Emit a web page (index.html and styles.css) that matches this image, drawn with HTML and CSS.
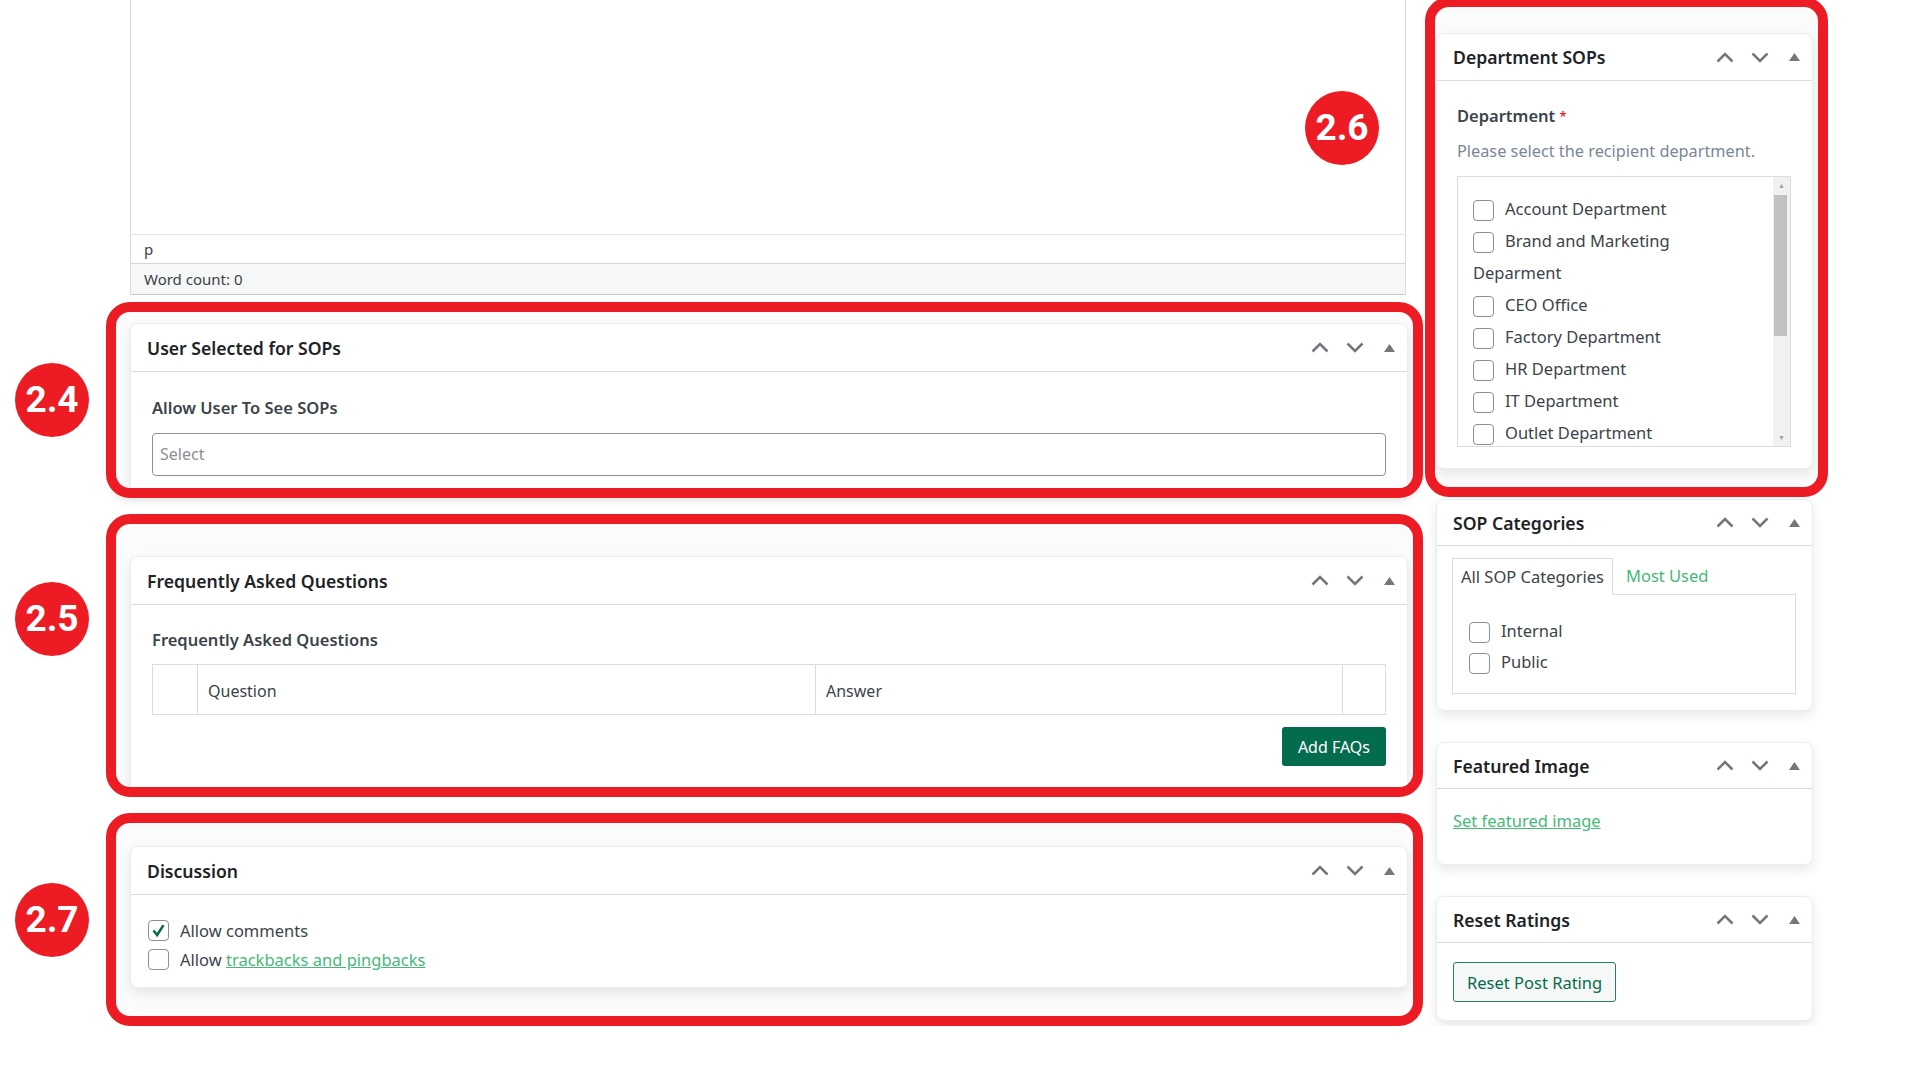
FILE: index.html
```html
<!DOCTYPE html>
<html lang="en">
  <head>
    <meta charset="utf-8" />
    <title>Edit SOP</title>
    <link rel="stylesheet" href="styles.css">
  </head>
  <body>
    <div class="page">
      <div class="main">
        <div class="editor">
          <div class="editor-body"></div>
          <div class="editor-path">p</div>
          <div class="editor-count">Word count: 0</div>
        </div>

        <section class="annot-row row-users">
          <span class="badge">2.4</span>
          <div class="annot annot-users">
            <div class="card">
              <div class="card-head">
                <h2>User Selected for SOPs</h2>
                <div class="handles">
                  <span class="handle"><svg class="chev" viewBox="0 0 18 11"><polyline points="1.5,9.5 9,2 16.5,9.5" /></svg></span>
                  <span class="handle"><svg class="chev" viewBox="0 0 18 11"><polyline points="1.5,1.5 9,9 16.5,1.5" /></svg></span>
                  <span class="handle"><svg class="tri" viewBox="0 0 11 8"><polygon points="0,8 5.5,0 11,8" /></svg></span>
                </div>
              </div>
              <div class="card-body users-body">
                <div class="field-label">Allow User To See SOPs</div>
                <div class="select">Select</div>
              </div>
            </div>
          </div>
        </section>

        <section class="annot-row row-faq">
          <span class="badge">2.5</span>
          <div class="annot annot-faq">
            <div class="card">
              <div class="card-head">
                <h2>Frequently Asked Questions</h2>
                <div class="handles">
                  <span class="handle"><svg class="chev" viewBox="0 0 18 11"><polyline points="1.5,9.5 9,2 16.5,9.5" /></svg></span>
                  <span class="handle"><svg class="chev" viewBox="0 0 18 11"><polyline points="1.5,1.5 9,9 16.5,1.5" /></svg></span>
                  <span class="handle"><svg class="tri" viewBox="0 0 11 8"><polygon points="0,8 5.5,0 11,8" /></svg></span>
                </div>
              </div>
              <div class="card-body faq-body">
                <div class="field-label">Frequently Asked Questions</div>
                <table class="faq-table">
                  <tr>
                    <th class="col-handle"></th>
                    <th class="col-question">Question</th>
                    <th>Answer</th>
                    <th class="col-remove"></th>
                  </tr>
                </table>
                <div class="faq-actions">
                  <button class="btn-primary">Add FAQs</button>
                </div>
              </div>
            </div>
          </div>
        </section>

        <section class="annot-row row-discussion">
          <span class="badge">2.7</span>
          <div class="annot annot-discussion">
            <div class="card">
              <div class="card-head">
                <h2>Discussion</h2>
                <div class="handles">
                  <span class="handle"><svg class="chev" viewBox="0 0 18 11"><polyline points="1.5,9.5 9,2 16.5,9.5" /></svg></span>
                  <span class="handle"><svg class="chev" viewBox="0 0 18 11"><polyline points="1.5,1.5 9,9 16.5,1.5" /></svg></span>
                  <span class="handle"><svg class="tri" viewBox="0 0 11 8"><polygon points="0,8 5.5,0 11,8" /></svg></span>
                </div>
              </div>
              <div class="card-body discussion-body">
                <div class="check-row">
                  <span class="box checked"><svg viewBox="0 0 21 21"><polyline points="5,10.5 9,15.5 16,4.5" /></svg></span>
                  Allow comments
                </div>
                <div class="check-row">
                  <span class="box"></span>
                  Allow&nbsp;<a href="#">trackbacks and pingbacks</a>
                </div>
              </div>
            </div>
          </div>
        </section>
      </div>

      <div class="side">
        <section class="annot-row row-dept">
          <span class="badge">2.6</span>
          <div class="annot annot-dept">
            <div class="card">
              <div class="card-head head-tall">
                <h2>Department SOPs</h2>
                <div class="handles">
                  <span class="handle"><svg class="chev" viewBox="0 0 18 11"><polyline points="1.5,9.5 9,2 16.5,9.5" /></svg></span>
                  <span class="handle"><svg class="chev" viewBox="0 0 18 11"><polyline points="1.5,1.5 9,9 16.5,1.5" /></svg></span>
                  <span class="handle"><svg class="tri" viewBox="0 0 11 8"><polygon points="0,8 5.5,0 11,8" /></svg></span>
                </div>
              </div>
              <div class="card-body dept-body">
                <div class="field-label">Department <span class="required">*</span></div>
                <p class="description">Please select the recipient department.</p>
                <div class="checklist">
                  <div class="checklist-items">
                    <div class="item"><span class="box"></span>Account Department</div>
                    <div class="item"><span class="box"></span>Brand and Marketing<br>Deparment</div>
                    <div class="item"><span class="box"></span>CEO Office</div>
                    <div class="item"><span class="box"></span>Factory Department</div>
                    <div class="item"><span class="box"></span>HR Department</div>
                    <div class="item"><span class="box"></span>IT Department</div>
                    <div class="item"><span class="box"></span>Outlet Department</div>
                  </div>
                  <div class="scrollbar">
                    <span class="scroll-arrow">&#9650;</span>
                    <span class="scroll-thumb"></span>
                    <span class="scroll-track"></span>
                    <span class="scroll-arrow">&#9660;</span>
                  </div>
                </div>
              </div>
            </div>
          </div>
        </section>

        <div class="card side-card card-cats">
          <div class="card-head">
            <h2>SOP Categories</h2>
            <div class="handles">
              <span class="handle"><svg class="chev" viewBox="0 0 18 11"><polyline points="1.5,9.5 9,2 16.5,9.5" /></svg></span>
              <span class="handle"><svg class="chev" viewBox="0 0 18 11"><polyline points="1.5,1.5 9,9 16.5,1.5" /></svg></span>
              <span class="handle"><svg class="tri" viewBox="0 0 11 8"><polygon points="0,8 5.5,0 11,8" /></svg></span>
            </div>
          </div>
          <div class="card-body cats-body">
            <div class="tabs">
              <span class="tab active">All SOP Categories</span>
              <a class="tab" href="#">Most Used</a>
            </div>
            <div class="tab-panel">
              <div class="item"><span class="box"></span>Internal</div>
              <div class="item"><span class="box"></span>Public</div>
            </div>
          </div>
        </div>

        <div class="card side-card">
          <div class="card-head">
            <h2>Featured Image</h2>
            <div class="handles">
              <span class="handle"><svg class="chev" viewBox="0 0 18 11"><polyline points="1.5,9.5 9,2 16.5,9.5" /></svg></span>
              <span class="handle"><svg class="chev" viewBox="0 0 18 11"><polyline points="1.5,1.5 9,9 16.5,1.5" /></svg></span>
              <span class="handle"><svg class="tri" viewBox="0 0 11 8"><polygon points="0,8 5.5,0 11,8" /></svg></span>
            </div>
          </div>
          <div class="card-body image-body">
            <a href="#">Set featured image</a>
          </div>
        </div>

        <div class="card side-card">
          <div class="card-head">
            <h2>Reset Ratings</h2>
            <div class="handles">
              <span class="handle"><svg class="chev" viewBox="0 0 18 11"><polyline points="1.5,9.5 9,2 16.5,9.5" /></svg></span>
              <span class="handle"><svg class="chev" viewBox="0 0 18 11"><polyline points="1.5,1.5 9,9 16.5,1.5" /></svg></span>
              <span class="handle"><svg class="tri" viewBox="0 0 11 8"><polygon points="0,8 5.5,0 11,8" /></svg></span>
            </div>
          </div>
          <div class="card-body reset-body">
            <button class="btn-outline">Reset Post Rating</button>
          </div>
        </div>
      </div>
    </div>
  </body>
</html>
```

FILE: styles.css
```css
body {
  margin: 0;
  background: #fff;
  color: #3c434a;
  font-family: "Noto Sans", "Open Sans", sans-serif;
  font-size: 16.5px;
}
a {
  color: #46b978;
}
.page {
  display: flex;
  align-items: flex-start;
  gap: 28px;
  padding-left: 130px;
}
.main {
  width: 1278px;
}
.side {
  width: 377px;
}

/* editor */
.editor {
  border: 1px solid #dcdcde;
  border-top: 0;
  border-bottom-color: #c3c4c7;
  margin-right: 2px;
}
.editor-body {
  height: 234px;
}
.editor-path,
.editor-count {
  padding: 0 13px;
  font-size: 15px;
}
.editor-path {
  height: 28px;
  line-height: 28px;
  border-top: 1px solid #e4e5e7;
}
.editor-count {
  height: 30px;
  line-height: 30px;
  border-top: 1px solid #d5d6d8;
  background: #f6f7f7;
}

/* annotations */
.annot-row {
  position: relative;
  margin-top: 16px;
}
.row-users {
  margin-top: 7px;
}
.annot {
  border: 10px solid #ed1c24;
  border-radius: 24px;
  overflow: hidden;
  background: #fbfbfb;
  margin: 0 -15px 0 -24px;
  padding: 11px 5px 0 14px;
}
.annot-users {
  box-shadow: 0 8px 10px -6px rgba(0, 0, 0, 0.12);
}
.annot-users .card {
  margin-bottom: -17px;
}
.annot-faq {
  padding-top: 32px;
}
.annot-faq .card {
  margin-bottom: -8px;
}
.annot-discussion {
  padding-top: 23px;
  padding-bottom: 28px;
}
.badge {
  position: absolute;
  left: -115px;
  z-index: 2;
  width: 74px;
  height: 74px;
  border-radius: 50%;
  background: #ed1c24;
  color: #fff;
  font: 700 37px/74px Roboto, "Liberation Sans", sans-serif;
  text-align: center;
}
.row-users .badge {
  top: 61px;
}
.row-faq .badge {
  top: 68px;
}
.row-discussion .badge {
  top: 70px;
}
.row-dept {
  margin-top: -3px;
}
.row-dept .badge {
  left: -131px;
  top: 94px;
}
.annot-dept {
  margin: 0 -15px 0 -11px;
  padding: 26px 5px 18px 1px;
}

/* meta boxes */
.card {
  background: #fff;
  border: 1px solid #ececec;
  border-radius: 8px;
  box-shadow: 0 5px 12px rgba(0, 0, 0, 0.09);
}
.card-head {
  display: flex;
  align-items: center;
  justify-content: space-between;
  height: 47px;
  padding-left: 16px;
  border-bottom: 1px solid #dcdcde;
}
.side-card .card-head {
  height: 45px;
}
.head-tall {
  height: 46px;
}
h2 {
  margin: 0;
  font-size: 17.6px;
  font-weight: 600;
  color: #1d2327;
}
.handles {
  display: flex;
}
.handle {
  width: 35px;
  display: flex;
  justify-content: center;
  align-items: center;
}
.chev {
  width: 18px;
  height: 11px;
  fill: none;
  stroke: #72777c;
  stroke-width: 2.5;
}
.tri {
  width: 11px;
  height: 8px;
  fill: #72777c;
}
.field-label {
  font-size: 16.5px;
  font-weight: 600;
  line-height: 24px;
}
.required {
  color: #e02b2b;
  font-size: 13px;
  vertical-align: top;
}
.description {
  margin: 11px 0 0;
  line-height: 24px;
  font-size: 16.3px;
  color: #7a8699;
}

/* user select */
.users-body {
  padding: 24px 21px 28px;
}
.select {
  margin-top: 13px;
  height: 43px;
  box-sizing: border-box;
  border: 1px solid #8c8f94;
  border-radius: 4px;
  padding: 0 7px;
  line-height: 41px;
  color: #8c8f94;
  font-size: 16px;
}

/* faq */
.faq-body {
  padding: 23px 21px 28px;
}
.faq-table {
  width: 100%;
  margin-top: 12px;
  border-collapse: collapse;
}
.faq-table th {
  height: 47px;
  border: 1px solid #dcdcde;
  padding: 2px 10px 0;
  text-align: left;
  font-weight: 400;
  font-size: 16px;
}
.faq-table .col-handle {
  width: 24px;
}
.faq-table .col-question {
  width: 597px;
}
.faq-table .col-remove {
  width: 22px;
}
.faq-actions {
  display: flex;
  justify-content: flex-end;
  margin-top: 12px;
}
.btn-primary {
  height: 39px;
  padding: 0 16px;
  border: 0;
  border-radius: 3px;
  background: #046c4e;
  color: #fff;
  font: 16px "Noto Sans", sans-serif;
}

/* discussion */
.discussion-body {
  padding: 21px 17px 13px;
}
.check-row {
  display: flex;
  align-items: center;
  line-height: 29px;
}
.box {
  display: inline-block;
  box-sizing: border-box;
  width: 21px;
  height: 21px;
  border: 1px solid #8c8f94;
  border-radius: 4px;
  background: #fff;
  vertical-align: middle;
  margin-right: 11px;
}
.box svg {
  display: block;
  width: 19px;
  height: 19px;
  fill: none;
  stroke: #046c4e;
  stroke-width: 2.8;
}

/* department list */
.dept-body {
  padding: 23px 21px 21px 20px;
}
.checklist {
  display: flex;
  margin-top: 13px;
  height: 271px;
  box-sizing: border-box;
  border: 1px solid #dcdcde;
}
.checklist-items {
  flex: 1;
  overflow: hidden;
  padding: 16px 0 0 15px;
}
.item {
  line-height: 32px;
  white-space: nowrap;
}
.scrollbar {
  width: 17px;
  display: flex;
  flex-direction: column;
  background: #f1f1f1;
}
.scroll-arrow {
  height: 17px;
  font-size: 7px;
  line-height: 17px;
  text-align: center;
  color: #a3a3a3;
}
.scroll-thumb {
  height: 141px;
  margin: 1px 3px 0 1px;
  background: #c1c1c1;
}
.scroll-track {
  flex: 1;
}

/* right column boxes */
.card-cats {
  margin-top: 2px;
}
.side-card + .side-card {
  margin-top: 31px;
}
.cats-body {
  padding: 12px 16px 16px 15px;
}
.tabs {
  display: flex;
}
.tab {
  height: 37px;
  box-sizing: border-box;
  line-height: 36px;
  padding: 0 8px;
  margin-bottom: -1px;
  position: relative;
  text-decoration: none;
}
.tab.active {
  border: 1px solid #dcdcde;
  border-bottom: 0;
  background: #fff;
  color: #3c434a;
}
.tab + .tab {
  margin-left: 5px;
}
.tab-panel {
  height: 100px;
  box-sizing: border-box;
  border: 1px solid #dcdcde;
  padding: 20px 0 0 16px;
}
.tab-panel .item {
  line-height: 31px;
}
.image-body {
  padding: 20px 16px 31px;
  line-height: 24px;
}
.reset-body {
  padding: 19px 16px 18px;
}
.btn-outline {
  height: 40px;
  padding: 0 13px;
  border: 1px solid #2a7d66;
  border-radius: 3px;
  background: #f6f7f7;
  color: #046c4e;
  font: 16.5px "Noto Sans", sans-serif;
}
```
